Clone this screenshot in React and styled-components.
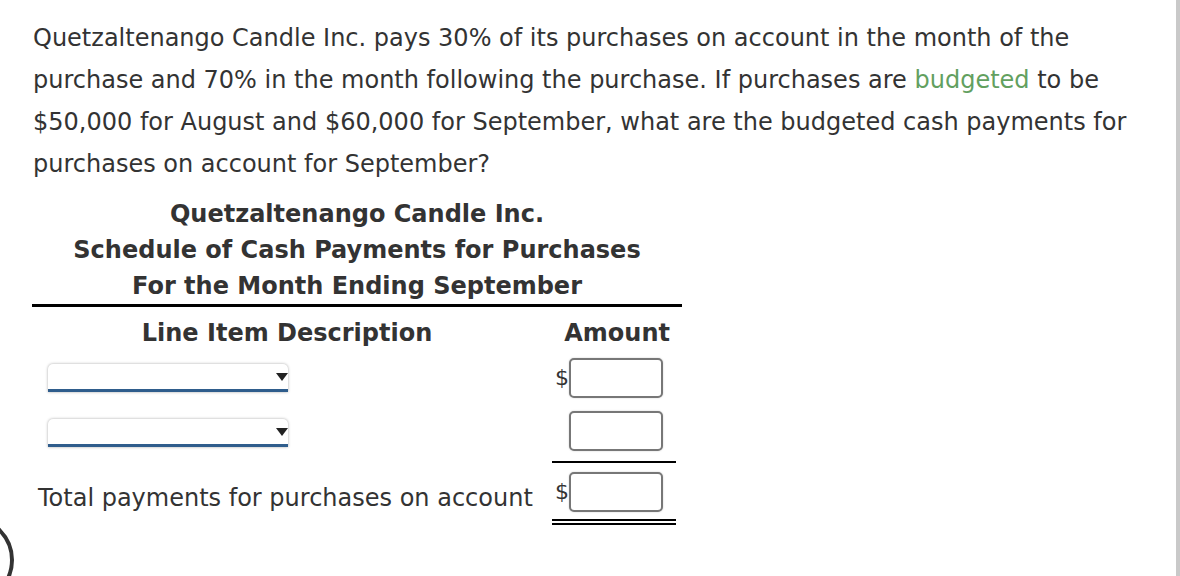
import React from 'react'
import styled, { createGlobalStyle } from 'styled-components'

const Global = createGlobalStyle`
    html, body {
        margin: 0;
        padding: 0;
        background: #fff;
    }
    body {
        font-family: "DejaVu Sans", Verdana, sans-serif;
        color: #333;
        overflow: hidden;
    }
`

const rows = [
    { dollar: true, height: 52, top: 6 },
    { dollar: false, height: 57, top: 7, rule: 'single' },
]

const App = () => {
    return (
        <Page>
            <Global />
            <Question>
                Quetzaltenango Candle Inc. pays 30% of its purchases on account in the month of the
                purchase and 70% in the month following the purchase. If purchases are{' '}
                <Term>budgeted</Term> to be $50,000 for August and $60,000 for September, what are
                the budgeted cash payments for purchases on account for September?
            </Question>
            <Schedule>
                <Heading>
                    <div>Quetzaltenango Candle Inc.</div>
                    <div>Schedule of Cash Payments for Purchases</div>
                    <div>For the Month Ending September</div>
                </Heading>
                <Grid>
                    <HeadCell>Line Item Description</HeadCell>
                    <HeadCell $right>Amount</HeadCell>
                    {rows.map((r, i) => (
                        <React.Fragment key={i}>
                            <DescCell $h={r.height}>
                                <Select>
                                    <Caret />
                                </Select>
                            </DescCell>
                            <AmountCell $h={r.height} $top={r.top} $rule={r.rule}>
                                <Dollar>{r.dollar ? '$' : ''}</Dollar>
                                <Input />
                            </AmountCell>
                        </React.Fragment>
                    ))}
                    <DescCell $h={56} $total>
                        Total payments for purchases on account
                    </DescCell>
                    <AmountCell $h={56} $top={9} $rule="double">
                        <Dollar>$</Dollar>
                        <Input />
                    </AmountCell>
                </Grid>
            </Schedule>
            <Ring />
        </Page>
    )
}

export default App

const Page = styled.div`
    position: relative;
    width: 1180px;
    height: 576px;
    border-right: 4px solid #c9c9c9;
    padding: 17px 0 0 33px;
    box-sizing: border-box;
    overflow: hidden;
`
const Question = styled.p`
    margin: 0;
    font-size: 24px;
    line-height: 42px;
`
const Term = styled.span`
    color: #62a05f;
`
const Schedule = styled.div`
    width: 650px;
    margin: 11px 0 0 -1px;
`
const Heading = styled.div`
    font-weight: bold;
    font-size: 24px;
    line-height: 36px;
    text-align: center;
    border-bottom: 3px solid #000;
`
const Grid = styled.div`
    display: grid;
    grid-template-columns: 520px 124px 6px;
`
const HeadCell = styled.div`
    grid-column: ${(p) => (p.$right ? '2 / 4' : '1')};
    height: 45px;
    padding: 8px ${(p) => (p.$right ? '12px' : '10px')} 0 0;
    box-sizing: border-box;
    font-weight: bold;
    font-size: 24px;
    line-height: 36px;
    text-align: ${(p) => (p.$right ? 'right' : 'center')};
    white-space: nowrap;
`
const DescCell = styled.div`
    grid-column: 1;
    height: ${(p) => p.$h}px;
    box-sizing: border-box;
    display: flex;
    align-items: center;
    padding: ${(p) => (p.$total ? '14px 0 0 6px' : '0 0 0 16px')};
    font-size: 24px;
    white-space: nowrap;
`
const Select = styled.div`
    position: relative;
    width: 240px;
    height: 25px;
    background: #fff;
    border-radius: 5px 5px 0 0;
    box-shadow: 0 0 3px rgba(0, 0, 0, 0.35);
    border-bottom: 3px solid #2f5d8c;
`
const Caret = styled.span`
    position: absolute;
    right: 0;
    top: 9px;
    width: 0;
    height: 0;
    border-left: 6px solid transparent;
    border-right: 6px solid transparent;
    border-top: 8px solid #222;
`
const AmountCell = styled.div`
    grid-column: 2;
    display: flex;
    align-items: flex-start;
    padding: ${(p) => p.$top}px 0 0 3px;
    box-sizing: border-box;
    border-bottom: ${(p) =>
        p.$rule === 'double' ? '6px double #000' : p.$rule === 'single' ? '2px solid #000' : '0'};
    height: ${(p) => p.$h + (p.$rule === 'double' ? 6 : p.$rule === 'single' ? 2 : 0)}px;
`
const Dollar = styled.span`
    width: 14px;
    font-size: 22px;
    line-height: 40px;
    color: #333;
`
const Input = styled.div`
    width: 94px;
    height: 40px;
    box-sizing: border-box;
    border: 2px solid #777;
    border-radius: 5px;
    background: #fff;
    box-shadow: 0 0 2px rgba(0, 0, 0, 0.2);
`
const Ring = styled.div`
    position: absolute;
    left: -74px;
    top: 516px;
    width: 88px;
    height: 88px;
    box-sizing: border-box;
    border: 4px solid #333;
    border-radius: 50%;
`
